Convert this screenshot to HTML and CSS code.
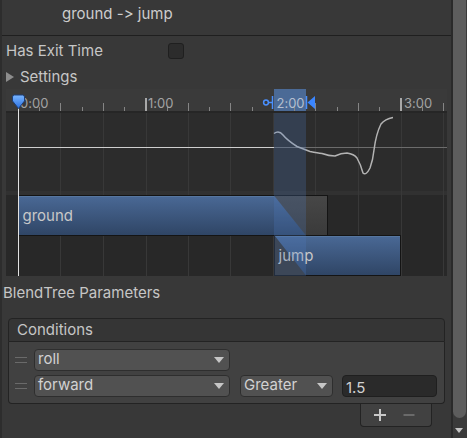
FILE: index.html
```html
<!DOCTYPE html>
<html>
<head>
<meta charset="utf-8">
<link rel="stylesheet" href="styles.css">
</head>
<body>
<div class="window">
  <div class="inspector">
    <div class="title">ground -&gt; jump</div>
    <div class="row first">
      <span class="label">Has Exit Time</span>
      <span class="checkbox"></span>
    </div>
    <div class="row foldout">
      <span class="fold-arrow"></span>
      <span class="fold-label">Settings</span>
    </div>
    <div class="timeline">
      <svg class="timeline-svg" width="441" height="187" viewBox="6 89 441 187">
        <defs>
          <linearGradient id="clipBlue" x1="0" y1="0" x2="0" y2="1">
            <stop offset="0" stop-color="#4a6996"/>
            <stop offset="1" stop-color="#2f4565"/>
          </linearGradient>
          <linearGradient id="clipGray" x1="0" y1="0" x2="0" y2="1">
            <stop offset="0" stop-color="#474747"/>
            <stop offset="1" stop-color="#3a3a3a"/>
          </linearGradient>
          <linearGradient id="markerBlue" x1="0" y1="0" x2="0" y2="1">
            <stop offset="0" stop-color="#7ab6ff"/>
            <stop offset="1" stop-color="#2a6fe0"/>
          </linearGradient>
        </defs>
        <!-- backgrounds -->
        <rect x="6" y="89" width="441" height="22" fill="#3a3a3a"/>
        <rect x="6" y="111" width="441" height="2" fill="#262626"/>
        <rect x="6" y="113" width="441" height="78" fill="#2c2c2c"/>
        <rect x="6" y="191" width="441" height="4" fill="#313131"/>
        <rect x="6" y="195" width="441" height="81" fill="#282828"/>
        <!-- ruler transition highlight -->
        <rect x="274" y="89" width="32" height="22" fill="#4b6a96"/>
        <!-- grid lines -->
        <g stroke="#383838" stroke-width="1">
          <line x1="60.5" y1="113" x2="60.5" y2="276"/>
          <line x1="103.5" y1="113" x2="103.5" y2="276"/>
          <line x1="146.5" y1="113" x2="146.5" y2="276"/>
          <line x1="188.5" y1="113" x2="188.5" y2="276"/>
          <line x1="230.5" y1="113" x2="230.5" y2="276"/>
          <line x1="273.5" y1="113" x2="273.5" y2="276"/>
          <line x1="315.5" y1="113" x2="315.5" y2="276"/>
          <line x1="358.5" y1="113" x2="358.5" y2="276"/>
          <line x1="401.5" y1="113" x2="401.5" y2="276"/>
          <line x1="443.5" y1="113" x2="443.5" y2="276"/>
        </g>
        <!-- ruler ticks -->
        <g stroke="#858585" stroke-width="1">
          <line x1="39.5" y1="107" x2="39.5" y2="111"/>
          <line x1="60.5" y1="103" x2="60.5" y2="111"/>
          <line x1="82.5" y1="107" x2="82.5" y2="111"/>
          <line x1="103.5" y1="103" x2="103.5" y2="111"/>
          <line x1="124.5" y1="107" x2="124.5" y2="111"/>
          <line x1="167.5" y1="107" x2="167.5" y2="111"/>
          <line x1="188.5" y1="103" x2="188.5" y2="111"/>
          <line x1="209.5" y1="107" x2="209.5" y2="111"/>
          <line x1="230.5" y1="103" x2="230.5" y2="111"/>
          <line x1="252.5" y1="107" x2="252.5" y2="111"/>
          <line x1="294.5" y1="107" x2="294.5" y2="111"/>
          <line x1="315.5" y1="103" x2="315.5" y2="111"/>
          <line x1="337.5" y1="107" x2="337.5" y2="111"/>
          <line x1="358.5" y1="103" x2="358.5" y2="111"/>
          <line x1="379.5" y1="107" x2="379.5" y2="111"/>
          <line x1="422.5" y1="107" x2="422.5" y2="111"/>
          <line x1="443.5" y1="103" x2="443.5" y2="111"/>
        </g>
        <g fill="#a8a8a8">
          <rect x="145" y="98" width="2" height="13"/>
          <rect x="400" y="98" width="2" height="13"/>
        </g>
        <g class="ruler-label">
          <text x="20" y="107.5">0:00</text>
          <text x="148" y="107.5">1:00</text>
          <text x="276.5" y="107.5" class="on-blue">2:00</text>
          <text x="404" y="107.5">3:00</text>
        </g>
        <!-- parameter curve -->
        <line x1="18.5" y1="147.5" x2="274" y2="147.5" stroke="#cfcfcf"/>
        <line x1="274" y1="147.5" x2="447" y2="147.5" stroke="#6c6c6c"/>
        <path d="M274,133.5 Q279,130 283,135 T297,146.5 L310,151.5 Q318,153 322,153.5 Q329,156 335,156 Q341,153 347,153 Q354,154 357,158 Q361,165 363,173 Q366,176 370,168 Q373,160 374,150 Q376,134 381,124 Q385,119 393,117.5" fill="none" stroke="#b3b3b3" stroke-width="1.5"/>
        <!-- clips -->
        <rect x="18.5" y="195.5" width="309" height="40" fill="url(#clipGray)"/>
        <path d="M18.5,195.5 H274 L306,235.5 H18.5 Z" fill="url(#clipBlue)"/>
        <line x1="19" y1="196.5" x2="274" y2="196.5" stroke="#56769f"/>
        <rect x="18.5" y="195.5" width="309" height="40" fill="none" stroke="#141414"/>
        <rect x="274.5" y="235.5" width="126" height="40" fill="url(#clipBlue)"/>
        <line x1="275" y1="236.5" x2="400" y2="236.5" stroke="#56769f"/>
        <path d="M274.5,235.5 L306,275.5 H274.5 Z" fill="#363636"/>
        <rect x="274.5" y="235.5" width="126" height="40" fill="none" stroke="#141414"/>
        <g class="clip-label">
          <text x="22.5" y="220.5">ground</text>
          <text x="278.5" y="260.5">jump</text>
        </g>
        <!-- transition overlay -->
        <rect x="274" y="113" width="32" height="163" fill="rgba(80,125,195,0.24)"/>
        <!-- playhead -->
        <line x1="18.5" y1="107" x2="18.5" y2="276" stroke="#e2e2e2"/>
        <path d="M12.5,97 Q12.5,95 14.5,95 H22.5 Q24.5,95 24.5,97 V101 L18.5,108.5 L12.5,101 Z" fill="url(#markerBlue)" stroke="#1d3f78" stroke-width="1"/>
        <!-- transition markers -->
        <g stroke="#4a90ff" fill="none" stroke-width="1.5">
          <line x1="272.5" y1="96" x2="272.5" y2="109"/>
          <line x1="268.5" y1="102.5" x2="272" y2="102.5"/>
          <circle cx="266" cy="102.5" r="2.4"/>
          <line x1="306.5" y1="96" x2="306.5" y2="109"/>
        </g>
        <path d="M307.5,102.5 L315,96 V109 Z" fill="#3b86ff"/>
      </svg>
    </div>
    <div class="section-label">BlendTree Parameters</div>
    <div class="list">
      <div class="list-header">Conditions</div>
      <div class="list-body">
        <div class="cond-row">
          <span class="handle"></span>
          <div class="dropdown param"><span class="dd-text">roll</span><span class="caret"></span></div>
        </div>
        <div class="cond-row">
          <span class="handle"></span>
          <div class="dropdown param"><span class="dd-text">forward</span><span class="caret"></span></div>
          <div class="dropdown mode"><span class="dd-text">Greater</span><span class="caret"></span></div>
          <div class="field">1.5</div>
        </div>
      </div>
      <div class="list-footer">
        <svg class="icon" width="14" height="14" viewBox="0 0 14 14"><path d="M7,1 V13 M1,7 H13" stroke="#c9c9c9" stroke-width="2"/></svg>
        <svg class="icon" width="12" height="14" viewBox="0 0 12 14"><path d="M0.5,7 H11.5" stroke="#6a6a6a" stroke-width="2"/></svg>
      </div>
    </div>
  </div>
  <div class="scrollbar">
    <div class="thumb"></div>
    <div class="scroll-arrow"></div>
  </div>
</div>
</body>
</html>
```
FILE: styles.css
```css
html, body {
  margin: 0;
  padding: 0;
}
body {
  background: #383838;
  font-family: "Inter", "Noto Sans", sans-serif;
  font-size: 15px;
  font-feature-settings: "calt" 0;
  font-variant-ligatures: none;
  color: #c6c6c6;
  width: 467px;
  height: 438px;
  overflow: hidden;
}
.window {
  display: flex;
  width: 467px;
  height: 438px;
}
.inspector {
  width: 449px;
  border-left: 2px solid #2d2d2d;
  display: flex;
  flex-direction: column;
}
.title {
  height: 35px;
  line-height: 27px;
  padding-left: 60px;
  border-bottom: 1px solid #1f1f1f;
  color: #cdcdcd;
}
.row {
  display: flex;
  align-items: center;
}
.row.first {
  margin-top: 2px;
  height: 26px;
  line-height: 26px;
}
.label {
  padding-left: 4px;
  width: 162px;
}
.checkbox {
  width: 16px;
  height: 16px;
  box-sizing: border-box;
  background: #2c2c2c;
  border: 1px solid #1f1f1f;
  border-radius: 3px;
}
.row.foldout {
  height: 25px;
  line-height: 25px;
}
.fold-arrow {
  margin-left: 4px;
  width: 0;
  height: 0;
  border-top: 5.5px solid transparent;
  border-bottom: 5.5px solid transparent;
  border-left: 8px solid #8d8d8d;
  margin-right: 6px;
}
.timeline {
  margin-left: 4px;
  width: 441px;
  height: 187px;
}
.timeline-svg {
  display: block;
}
.ruler-label text {
  font-family: "Inter", "Noto Sans", sans-serif;
  font-size: 13px;
  fill: #a3a3a3;
}
.ruler-label text.on-blue {
  fill: #b4bfcf;
}
.clip-label text {
  font-family: "Inter", "Noto Sans", sans-serif;
  font-size: 15px;
  fill: #c8c8c8;
}
.section-label {
  padding-left: 1px;
  padding-top: 1px;
  line-height: 32px;
  height: 32px;
}
.list {
  margin-top: 9px;
  margin-left: 6px;
  width: 437px;
  display: flex;
  flex-direction: column;
}
.list-header {
  height: 22px;
  line-height: 22px;
  padding-left: 8px;
  background: #353535;
  border: 1px solid #232323;
  border-radius: 4px 4px 0 0;
}
.list-body {
  background: #414141;
  border: 1px solid #232323;
  border-top: none;
  border-radius: 0 0 4px 4px;
  padding: 7px 7px 6px 6px;
  display: flex;
  flex-direction: column;
  gap: 4px;
}
.cond-row {
  display: flex;
  align-items: center;
  height: 22px;
}
.handle {
  width: 12px;
  height: 4px;
  border-top: 1px solid #6a6a6a;
  border-bottom: 1px solid #6a6a6a;
  margin-right: 7px;
}
.dropdown {
  height: 22px;
  box-sizing: border-box;
  background: #515151;
  border: 1px solid #2e2e2e;
  border-radius: 4px;
  display: flex;
  align-items: center;
  padding: 0 5px 2px 3px;
  color: #d2d2d2;
}
.dropdown.param {
  width: 196px;
}
.dropdown.mode {
  width: 93px;
  margin-left: 10px;
}
.dd-text {
  line-height: 18px;
}
.caret {
  margin-left: auto;
  width: 0;
  height: 0;
  margin-top: 2px;
  border-left: 5px solid transparent;
  border-right: 5px solid transparent;
  border-top: 6px solid #c6c6c6;
}
.field {
  margin-left: 9px;
  width: 95px;
  height: 22px;
  box-sizing: border-box;
  background: #2a2a2a;
  border: 1px solid #1f1f1f;
  border-radius: 4px;
  padding-left: 3px;
  padding-top: 1px;
  line-height: 21px;
  color: #d2d2d2;
}
.list-footer {
  align-self: flex-end;
  margin-right: 13px;
  height: 22px;
  background: #414141;
  border: 1px solid #232323;
  border-top: none;
  border-radius: 0 0 4px 4px;
  display: flex;
  align-items: center;
  padding-left: 12px;
  box-sizing: content-box;
  width: 58px;
  gap: 16px;
}
.icon {
  display: block;
}
.scrollbar {
  width: 14px;
  border-left: 2px solid #2a2a2a;
  background: #3a3a3a;
  display: flex;
  flex-direction: column;
  align-items: flex-start;
}
.thumb {
  width: 13px;
  height: 418px;
  background: #5d5d5d;
  border-radius: 0 0 7px 7px;
}
.scroll-arrow {
  margin-top: 10px;
  margin-left: 2px;
  width: 0;
  height: 0;
  border-left: 4.5px solid transparent;
  border-right: 4.5px solid transparent;
  border-top: 5px solid #c4c4c4;
}
```
